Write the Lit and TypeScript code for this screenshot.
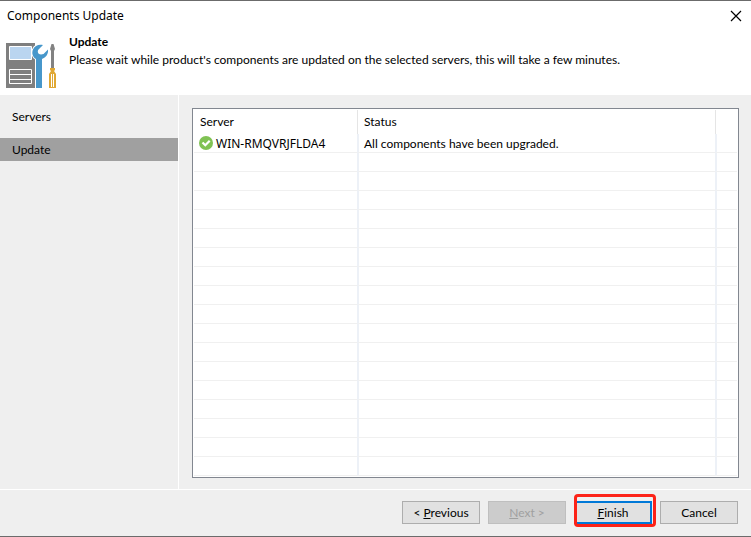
import { LitElement, html, css } from "lit";
import { customElement, property } from "lit/decorators.js";

interface ServerRow {
  server: string;
  status: string;
}

const TOTAL_ROWS = 18;

@customElement("app-root")
export class AppRoot extends LitElement {
  @property({ attribute: false }) rows: ServerRow[] = [
    { server: "WIN-RMQVRJFLDA4", status: "All components have been upgraded." },
  ];

  static styles = css`
    :host {
      display: flex;
      flex-direction: column;
      box-sizing: border-box;
      min-height: 100vh;
      border-top: 1px solid #6b6b6b;
      border-bottom: 1px solid #6b6b6b;
      background: #efefef;
      color: #000;
      font: 12px/16px Lato, "Open Sans", sans-serif;
    }
    h1, h2, p, ul { margin: 0; padding: 0; font: inherit; }
    .titlebar {
      display: flex;
      align-items: center;
      justify-content: space-between;
      height: 30px;
      padding: 0 8px 0 7px;
      background: #fff;
      font-family: "Noto Sans", "Open Sans", sans-serif;
    }
    .close {
      display: flex;
      padding: 1px;
      border: 0;
      background: none;
    }
    .banner {
      display: flex;
      gap: 12px;
      min-height: 64px;
      padding-left: 5px;
      background: #fff;
    }
    .logo { margin-top: 11px; }
    .caption { padding-top: 3px; }
    .caption h2 { font-weight: 700; line-height: 16px; }
    .caption p { line-height: 20px; }
    .main { display: flex; flex: 1; }
    .steps {
      box-sizing: border-box;
      width: 179px;
      flex: none;
      padding-top: 10px;
      border-right: 1px solid #fff;
    }
    .steps ul {
      display: flex;
      flex-direction: column;
      gap: 10px;
      list-style: none;
    }
    .step { padding: 0 12px; line-height: 23px; }
    .step.current { background: #a0a0a0; }
    .content { display: flex; flex: 1; padding: 13px 12px 11px 13px; }
    .list {
      flex: 1;
      padding: 1px;
      border: 1px solid #828790;
      background: #fff;
    }
    table {
      width: 100%;
      table-layout: fixed;
      border-collapse: separate;
      border-spacing: 0;
    }
    th, td {
      box-sizing: border-box;
      text-align: left;
      font-weight: 400;
      white-space: nowrap;
    }
    th { height: 24px; padding: 0 6px; border-left: 1px solid #e5e5e5; }
    td {
      height: 19px;
      padding: 2px 5px 0;
      line-height: 16px;
      border-left: 2px solid #edf1f7;
      border-bottom: 1px solid #f0f0f0;
    }
    th:first-child, td:first-child { border-left: 0; }
    .col-server { width: 163px; }
    .col-rest { width: 22px; }
    .name {
      display: flex;
      align-items: flex-start;
      gap: 3px;
      height: 16px;
      font-family: "Noto Sans", "Open Sans", sans-serif;
    }
    .footer {
      display: flex;
      gap: 8px;
      justify-content: flex-end;
      padding: 11px 13px 12px;
      border-top: 1px solid #fff;
    }
    .btn {
      box-sizing: border-box;
      width: 78px;
      height: 23px;
      padding: 0;
      border: 1px solid #adadad;
      background: #e1e1e1;
      color: #000;
      font: inherit;
    }
    .btn:disabled { border-color: #bfbfbf; background: #ccc; color: #a0a0a0; }
    .btn.default { border: 2px solid #0078d7; }
    .marked { position: relative; display: flex; }
    .marked::after {
      content: "";
      position: absolute;
      inset: -7px -4px -3px 0;
      border: 3px solid #fc2217;
      border-radius: 4px;
      pointer-events: none;
    }
    svg { display: block; flex: none; }
  `;

  private renderLogo() {
    return html`<svg class="logo" width="52" height="48" viewBox="5 42 52 48" aria-hidden="true">
      <path fill="#7f7f7f" d="M6 43h29v45H6z" />
      <path fill="#bad5f0" stroke="#fff" d="M9.500 46.500h22v13h-22z" />
      <path fill="none" stroke="#fff" d="M9.500 69.500h22v14h-22zM10 74.500h21M10 79.500h21" />
      <path
        fill="#4797cb"
        stroke="#fff"
        stroke-width="2"
        paint-order="stroke"
        d="M43 45 38.500 49.500C37 51.500 38 54.500 41 54.500L43.500 54 48 49.500C48.500 54 46 57.500 42 59V88H36V59C32.500 57 31.500 53 33 49.500 34.500 45.500 39 44 43 45z"
      />
      <path fill="#828282" d="M51.500 44h2l1.500 5-1 2v17h-3V51L50 49z" />
      <path fill="#e0a834" d="M50 68h5v2l-1 1 2 3v14h-7V74l2-3-1-1z" />
      <path stroke="#fff" d="M51.500 74v13M53.500 74v13" stroke-width="1" />
    </svg>`;
  }

  private renderRow(row?: ServerRow) {
    return html`<tr>
      <td>
        ${row
          ? html`<div class="name">
              <svg width="14" height="14" viewBox="0 0 14 14" role="img" aria-label="Success">
                <circle cx="7" cy="7" r="7" fill="#80c254" />
                <path d="M3.500 6.500 6.300 9.300 10.700 4.800" fill="none" stroke="#fff" stroke-width="2.200" />
              </svg>
              <span>${row.server}</span>
            </div>`
          : ""}
      </td>
      <td>${row?.status ?? ""}</td>
      <td></td>
    </tr>`;
  }

  render() {
    const rows = Array.from({ length: TOTAL_ROWS }, (_, i) => this.rows[i]);
    return html`
      <header class="titlebar">
        <h1>Components Update</h1>
        <button class="close" type="button" aria-label="Close">
          <svg width="12" height="12" viewBox="0 0 12 12">
            <path d="M1 1 11 11M11 1 1 11" stroke="#000" stroke-width="1.200" />
          </svg>
        </button>
      </header>
      <section class="banner">
        ${this.renderLogo()}
        <div class="caption">
          <h2>Update</h2>
          <p>Please wait while product's components are updated on the selected servers, this will take a few minutes.</p>
        </div>
      </section>
      <div class="main">
        <nav class="steps">
          <ul>
            <li class="step">Servers</li>
            <li class="step current" aria-current="step">Update</li>
          </ul>
        </nav>
        <main class="content">
          <div class="list">
            <table>
              <colgroup>
                <col class="col-server" />
                <col />
                <col class="col-rest" />
              </colgroup>
              <thead>
                <tr><th scope="col">Server</th><th scope="col">Status</th><th></th></tr>
              </thead>
              <tbody>
                ${rows.map((row) => this.renderRow(row))}
              </tbody>
            </table>
          </div>
        </main>
      </div>
      <footer class="footer">
        <button class="btn" type="button">&lt; <u>P</u>revious</button>
        <button class="btn" type="button" disabled><u>N</u>ext &gt;</button>
        <div class="marked"><button class="btn default" type="button"><u>F</u>inish</button></div>
        <button class="btn" type="button">Cancel</button>
      </footer>
    `;
  }
}
